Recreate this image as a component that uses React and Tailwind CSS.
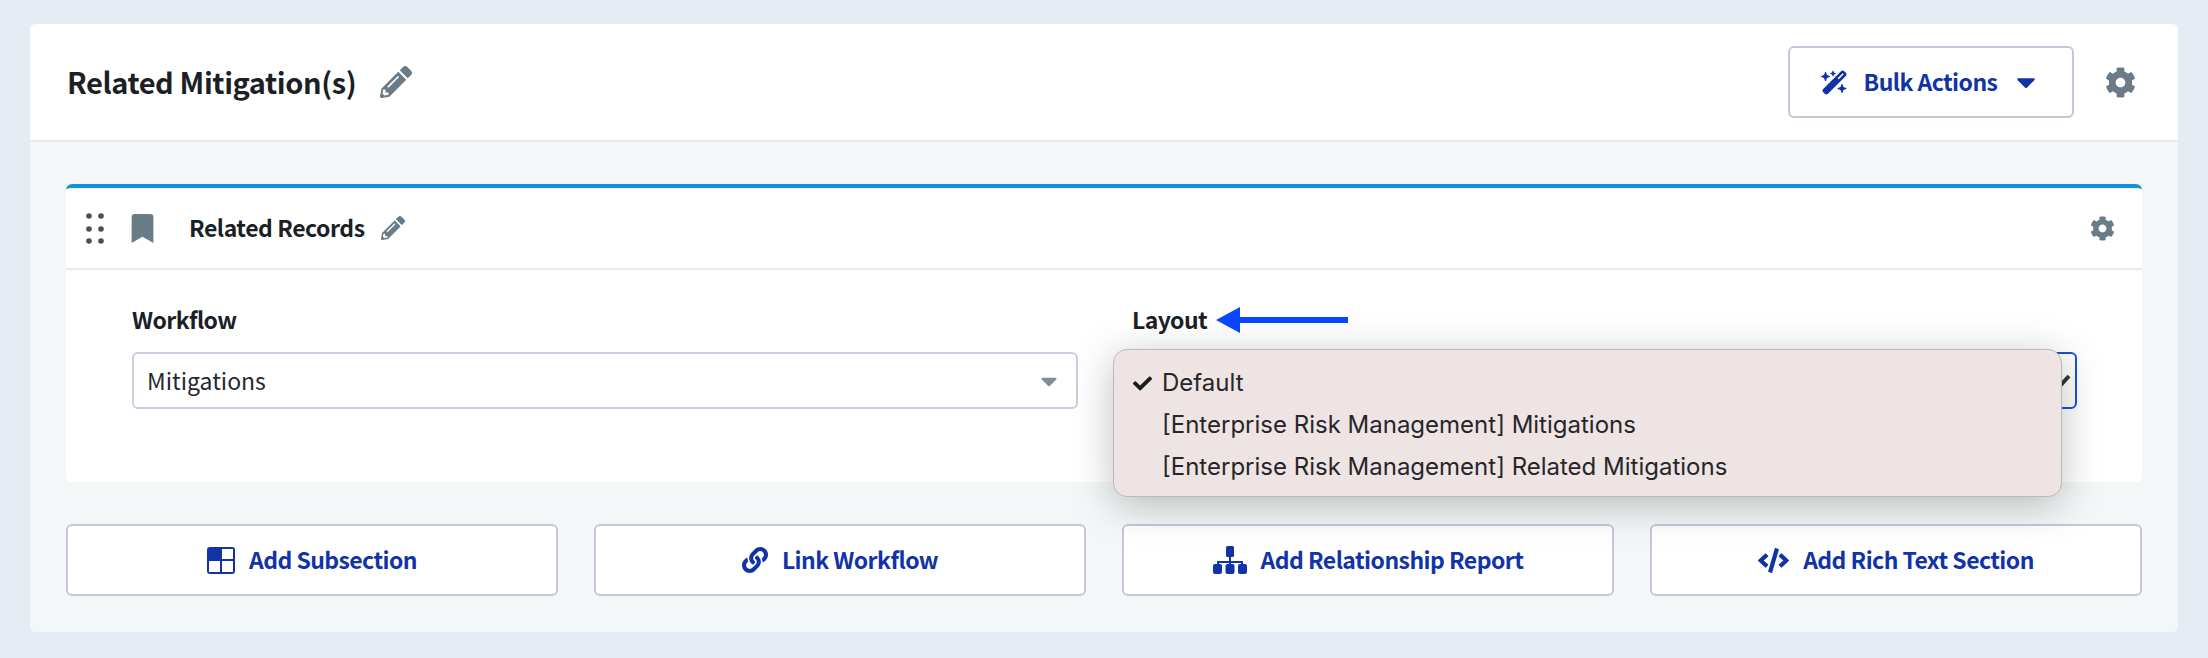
import { FaBookmark, FaCaretDown, FaCheck, FaCode, FaCog, FaLink, FaPencilAlt } from "react-icons/fa";
import { FaWandMagicSparkles } from "react-icons/fa6";

const SANS = "font-['Noto_Sans_CJK_JP',sans-serif]";

function DragHandle() {
  return (
    <svg width="18" height="32" viewBox="0 0 18 32" className="fill-[#4a4f57]">
      {[4, 17, 29].map((y) => (
        <g key={y}>
          <circle cx="3" cy={y} r="2.8" />
          <circle cx="15" cy={y} r="2.8" />
        </g>
      ))}
    </svg>
  );
}

function SubsectionIcon() {
  return (
    <svg width="28" height="27" viewBox="0 0 28 27" className="fill-[#1233a8]">
      <path d="M3 0h22a3 3 0 0 1 3 3v21a3 3 0 0 1-3 3H3a3 3 0 0 1-3-3V3a3 3 0 0 1 3-3Z" />
      <rect x="15" y="2" width="11" height="10" fill="#fff" />
      <rect x="2" y="14" width="11" height="11" fill="#fff" />
      <rect x="15" y="14" width="11" height="11" fill="#fff" />
    </svg>
  );
}

function ReportIcon() {
  return (
    <svg width="34" height="28" viewBox="0 0 34 28" className="fill-[#1233a8]">
      <rect x="13" y="0" width="8" height="11" rx="1.5" />
      <path d="M16 11h2v4h12v4h-2v-2H18v2h-2v-2H6v2H4v-4h12Z" />
      <rect x="0" y="18" width="9" height="10" rx="2" />
      <rect x="12.5" y="18" width="9" height="10" rx="2" />
      <rect x="25" y="18" width="9" height="10" rx="2" />
    </svg>
  );
}

function ActionButton({ icon, label }) {
  return (
    <button
      type="button"
      className="flex h-[72px] items-center justify-center gap-[14px] rounded-md border-2 border-[#c5c7d9] bg-white text-[23px] font-semibold tracking-[-0.55px] text-[#1233a8]"
    >
      {icon}
      <span className="pb-[2px]">{label}</span>
    </button>
  );
}

export default function App() {
  return (
    <div className={`${SANS} h-[658px] bg-[#e4ebf3] px-[30px] pb-[26px] pt-[24px] text-[#1c1f26]`}>
      <div className="flex h-[608px] flex-col overflow-hidden rounded-md bg-[#f4f7f8]">
        <header className="flex h-[118px] shrink-0 items-center justify-between border-b-2 border-[#e6ebf2] bg-white pl-[37px] pr-[42px]">
          <div className="flex items-center gap-[24px]">
            <h1 className="text-[29px] font-semibold tracking-[-0.4px]">Related Mitigation(s)</h1>
            <FaPencilAlt className="text-[32px] text-[#6a7c87]" />
          </div>
          <div className="flex items-center gap-[31px]">
            <button
              type="button"
              className="flex h-[72px] w-[286px] items-center justify-center rounded-md border-2 border-[#c5c7d9] bg-white text-[23px] font-semibold tracking-[-0.55px] text-[#1233a8]"
            >
              <FaWandMagicSparkles className="text-[27px]" />
              <span className="ml-[16px] pb-[2px]">Bulk Actions</span>
              <FaCaretDown className="ml-[14px] text-[30px]" />
            </button>
            <FaCog className="text-[31px] text-[#6a7c87]" />
          </div>
        </header>

        <main className="flex flex-1 flex-col px-[36px] pt-[42px]">
          <section className="relative h-[298px] rounded-md border-t-4 border-[#1291d9] bg-white">
            <div className="flex h-[82px] items-center justify-between border-b-2 border-[#e6ebf2] pl-[20px] pr-[27px]">
              <div className="flex items-center">
                <DragHandle />
                <FaBookmark className="ml-[24px] text-[29px] text-[#6a7c87]" />
                <h2 className="ml-[32px] pb-[2px] text-[23px] font-semibold tracking-[-0.45px]">Related Records</h2>
                <FaPencilAlt className="ml-[16px] text-[24px] text-[#6a7c87]" />
              </div>
              <FaCog className="text-[25px] text-[#6a7c87]" />
            </div>

            <div className="flex gap-[54px] pl-[66px] pr-[65px] pt-[30px]">
              <div className="w-[946px]">
                <label className="flex h-[38px] items-center text-[23px] font-semibold tracking-[-0.6px]">Workflow</label>
                <div className="mt-[14px] flex h-[57px] items-center justify-between rounded-md border-2 border-[#c9cfdf] pl-[13px] pr-[14px] text-[23px] text-[#25282e]">
                  <span>Mitigations</span>
                  <FaCaretDown className="text-[26px] text-[#868c94]" />
                </div>
              </div>
              <div className="flex-1">
                <label className="flex h-[38px] items-center text-[23px] font-semibold tracking-[-0.6px]">
                  Layout
                  <svg width="132" height="26" viewBox="0 0 132 26" className="ml-[9px] mt-[2px] fill-[#0a47ff]">
                    <path d="M0 13 24 0v10h108v6H24v10Z" />
                  </svg>
                </label>
                <div className="mt-[14px] flex h-[57px] items-center justify-end rounded-md border-2 border-[#1a4fe0] pr-[4px]">
                  <svg width="12" height="14" viewBox="0 0 12 14">
                    <path d="M1 12 10 2" stroke="#33373d" strokeWidth="4" />
                  </svg>
                </div>
              </div>
            </div>

            {/* native select popup sits over the Layout field */}
            <ul className="absolute left-[1047px] top-[161px] h-[148px] w-[949px] rounded-[14px] border border-[#bdb8b6] bg-[#ede4e3] pt-[12px] font-['Inter',sans-serif] text-[24px] leading-[42px] text-[#26262a] shadow-[0_8px_40px_rgba(0,0,0,0.25)]">
              <li className="relative pl-[48px]">
                <FaCheck className="absolute left-[19px] top-[12px] text-[19px] text-[#1c1c1e]" />
                Default
              </li>
              <li className="pl-[48px]">[Enterprise Risk Management] Mitigations</li>
              <li className="pl-[48px]">[Enterprise Risk Management] Related Mitigations</li>
            </ul>
          </section>

          <div className="mt-[42px] grid grid-cols-4 gap-[36px]">
            <ActionButton icon={<SubsectionIcon />} label="Add Subsection" />
            <ActionButton icon={<FaLink className="text-[26px]" />} label="Link Workflow" />
            <ActionButton icon={<ReportIcon />} label="Add Relationship Report" />
            <ActionButton icon={<FaCode className="text-[31px]" />} label="Add Rich Text Section" />
          </div>
        </main>
      </div>
    </div>
  );
}
